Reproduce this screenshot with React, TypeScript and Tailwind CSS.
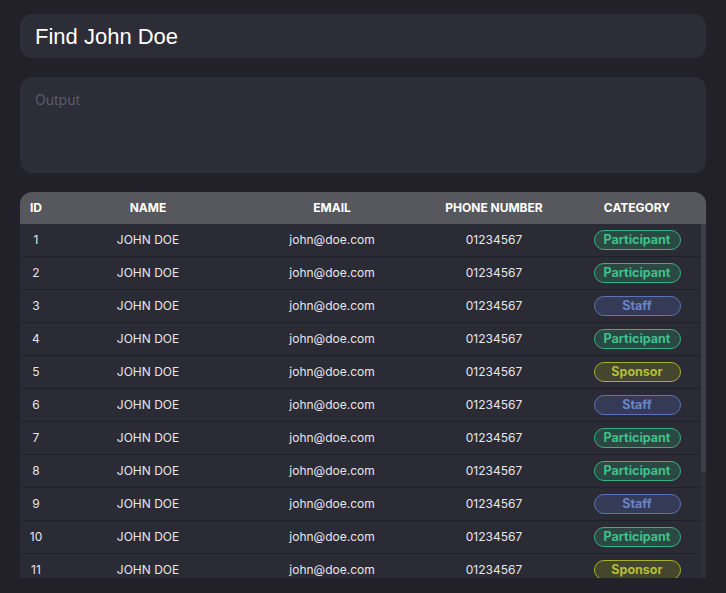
const categoryStyles: Record<string, string> = {
  Participant: "border-[#36b27e] bg-[#2b4943] text-[#3fc08a]",
  Staff: "border-[#5a74b6] bg-[#353b57] text-[#6a84c8]",
  Sponsor: "border-[#a5b02c] bg-[#44462e] text-[#b4be36]",
};

const categories = [
  "Participant",
  "Participant",
  "Staff",
  "Participant",
  "Sponsor",
  "Staff",
  "Participant",
  "Participant",
  "Staff",
  "Participant",
  "Sponsor",
];

const people = categories.map((category, i) => ({
  id: i + 1,
  name: "JOHN DOE",
  email: "john@doe.com",
  phone: "01234567",
  category,
}));

const cols = "grid grid-cols-[32px_192px_176px_148px_1fr] items-center";

export default function App() {
  return (
    <div className="min-h-screen bg-[#222129] px-5 pt-[14px] pb-[15px] font-['Inter',sans-serif]">
      <div className="flex flex-col gap-[19px]">
        <input
          className="h-[44px] w-full rounded-xl bg-[#2d2d37] px-[15px] pt-[2px] font-['Liberation_Sans',Arial,sans-serif] text-[22px] text-white outline-none"
          defaultValue="Find John Doe"
        />

        <textarea
          className="h-[96px] w-full resize-none rounded-xl bg-[#2d2d37] px-[15px] pt-[13px] text-sm text-white outline-none placeholder:text-[#5a5a66]"
          placeholder="Output"
        />

        <div className="flex h-[386px] flex-col overflow-hidden rounded-t-xl">
          <div className={`${cols} h-8 shrink-0 bg-[#57585d] text-xs font-bold text-white`}>
            <div className="text-center">ID</div>
            <div className="text-center">NAME</div>
            <div className="text-center">EMAIL</div>
            <div className="text-center">PHONE NUMBER</div>
            <div className="text-center">CATEGORY</div>
          </div>

          <div className="flex min-h-0 flex-1">
            <div className="flex-1 overflow-hidden">
              {people.map((p) => (
                <div
                  key={p.id}
                  className={`${cols} h-[33px] border-b border-[#222129] bg-[#2b2b35] text-xs text-[#e6e6ea]`}
                >
                  <div className="text-center">{p.id}</div>
                  <div className="text-center">{p.name}</div>
                  <div className="text-center">{p.email}</div>
                  <div className="text-center">{p.phone}</div>
                  <div className="flex justify-center pl-[5px]">
                    <span
                      className={`flex h-5 w-[87px] items-center justify-center rounded-full border text-[12.5px] font-bold ${categoryStyles[p.category]}`}
                    >
                      {p.category}
                    </span>
                  </div>
                </div>
              ))}
            </div>

            {/* scrollbar */}
            <div className="w-[5px] bg-[#2f2f38]">
              <div className="h-[248px] bg-[#3e3e48]" />
            </div>
          </div>
        </div>
      </div>
    </div>
  );
}
